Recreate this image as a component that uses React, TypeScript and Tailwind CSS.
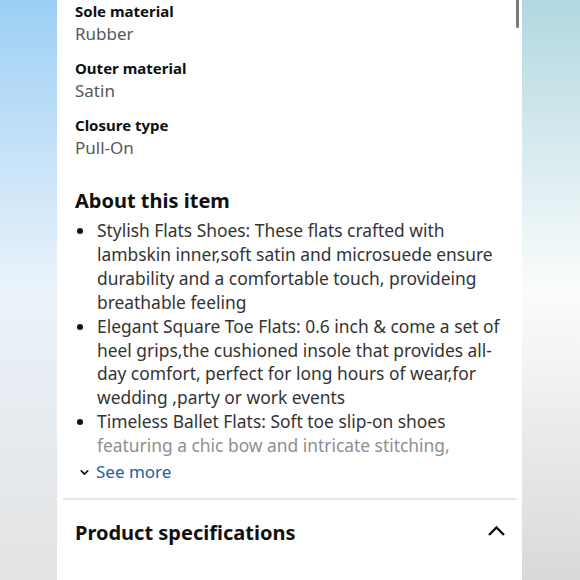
import { ChevronDown } from 'lucide-react'

const specs = [
	{ label: 'Sole material', value: 'Rubber' },
	{ label: 'Outer material', value: 'Satin' },
	{ label: 'Closure type', value: 'Pull-On' },
]

const bullets = [
	[
		'Stylish Flats Shoes: These flats crafted with',
		'lambskin inner,soft satin and microsuede ensure',
		'durability and a comfortable touch, provideing',
		'breathable feeling',
	],
	[
		'Elegant Square Toe Flats: 0.6 inch & come a set of',
		'heel grips,the cushioned insole that provides all-',
		'day comfort, perfect for long hours of wear,for',
		'wedding ,party or work events',
	],
	[
		'Timeless Ballet Flats: Soft toe slip-on shoes',
		'featuring a chic bow and intricate stitching,',
	],
]

export default function App() {
	return (
		<div className="flex h-[580px] w-[580px] overflow-hidden font-['Noto_Sans',sans-serif]">
			<div className="w-[57px] shrink-0 bg-gradient-to-b from-[#9ccff5] via-[#eaf3fa] to-[#e3e3e3]" />
			<div className="relative w-[465px] shrink-0 bg-white">
				<div className="absolute right-[3px] top-0 h-[28px] w-[3px] rounded-b-full bg-[#7a7a7a]" />
				<div className="px-[18px]">
					<div className="flex flex-col gap-[12px]">
						{specs.map(s => (
							<div key={s.label}>
								<p className="text-[15px] font-bold leading-[22px] text-[#0f1111]">{s.label}</p>
								<p className="text-[17px] leading-[23px] text-[#565959]">{s.value}</p>
							</div>
						))}
					</div>
					<h2 className="mt-[28px] text-[20px] font-bold leading-[28px] text-[#0f1111]">About this item</h2>
					<ul className="mt-[4px]">
						{bullets.map((lines, i) => (
							<li key={i} className="flex text-[17.4px] leading-[23.9px] text-[#333333]">
								<span className="flex h-[23.9px] w-[22px] shrink-0 items-center pl-[2px]">
									<span className="h-[6px] w-[6px] rounded-full bg-[#0f1111]" />
								</span>
								<span className="flex flex-col">
									{lines.map((line, j) => (
										<span
											key={j}
											className={`whitespace-nowrap ${i === 2 && j === 1 ? 'text-[#8d8f8f]' : ''}`}>
											{line}
										</span>
									))}
								</span>
							</li>
						))}
					</ul>
					<div className="mt-[2px] flex items-center gap-[5px] text-[17px] leading-[24px] text-[#2162a1]">
						<ChevronDown className="ml-[3px] h-[13px] w-[13px] text-[#0f1111]" strokeWidth={3} />
						<span>See more</span>
					</div>
				</div>
				<div className="mx-[6px] mt-[14px] h-[2px] bg-[#e6e6e6]" />
				<div className="flex items-center justify-between pl-[18px] pr-[16px] pt-[19px]">
					<h2 className="text-[20px] font-bold leading-[28px] text-[#0f1111]">Product specifications</h2>
					<svg width="19" height="12" viewBox="0 0 19 12" fill="none" className="mt-[-4px]">
						<polyline points="2,10 9.5,2.5 17,10" stroke="#0f1111" strokeWidth="2.4" />
					</svg>
				</div>
			</div>
			<div className="w-[58px] shrink-0 bg-gradient-to-b from-[#b1d8e0] via-[#fbfcfc] to-[#d9d9d9]" />
		</div>
	)
}
